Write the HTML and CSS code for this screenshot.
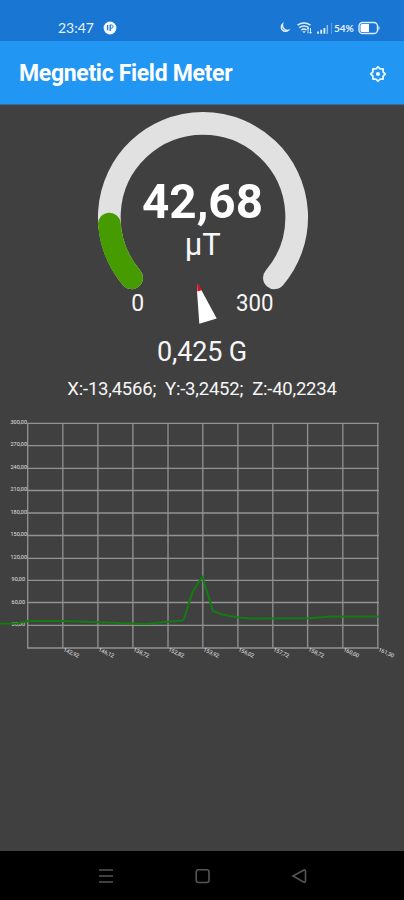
FILE: index.html
```html
<!DOCTYPE html>
<html lang="en">
<head>
<meta charset="utf-8">
<title>Megnetic Field Meter</title>
<link rel="stylesheet" href="styles.css">
</head>
<body>
<div class="phone">
  <header class="status">
    <span class="clock">23:47</span>
    <svg class="badge" width="14" height="14" viewBox="0 0 14 14"><circle cx="7" cy="7" r="6.4" fill="#f4f9ff"/><path d="M4.6 4v5.2M7.2 3.8v6.2" fill="none" stroke="#1976d2" stroke-width="1.3"/><path d="M7.200 4h1.200a1.500 1.500 0 0 1 0 3.200H7.200" fill="none" stroke="#1976d2" stroke-width=".9"/></svg>
    <svg class="signals" width="56" height="16" viewBox="0 0 56 16" fill="none" stroke="#e3effb">
      <path d="M4.6 4A4.2 4.2 0 1 0 10.400 10.200A5 5 0 0 1 4.600 4Z" stroke-width="1.3"/>
      <path d="M19.5 5.2Q26 .8 32.5 5.2M21.3 7.7Q26 4.5 30.7 7.7M23.3 10Q26 8 28.5 10" stroke-width="1.5"/>
      <path d="M24.4 11.2h3.2L26 13.3z" fill="#e3effb" stroke="none"/>
      <path d="M30 8v5.3M32.5 8v5.3M28.8 9.2L30 8l1 1.2M31.5 12l1 1.3 1.2-1.3" stroke-width=".9"/>
      <path d="M40 11.5v2.3M43.2 9.8v4M46.4 8v5.8" stroke-width="1.8"/><path d="M49.3 5v8.8" stroke-width="1.5" opacity=".6"/><path d="M53.5 3v11" stroke-width="1" opacity=".35"/>
    </svg>
    <span class="percent">54%</span>
    <svg width="23" height="14" viewBox="0 0 23 14"><rect x="1" y="1.5" width="18.5" height="11" rx="3.6" fill="none" stroke="#dcebfa" stroke-width="1.4"/><path d="M4 3h7v8H4a1.5 1.5 0 0 1-1.5-1.5v-5A1.5 1.5 0 0 1 4 3z" fill="#fff"/><path d="M20.5 4.5Q22.8 7 20.5 9.5z" fill="#dcebfa"/></svg>
  </header>
  <div class="appbar">
    <h1>Megnetic Field Meter</h1>
    <svg width="18" height="18" viewBox="-9 -9 18 18" fill="none" stroke="#eaf5ff"><path d="M0-7.2L2.1-5.1L5.1-5.1L5.1-2.1L7.2 0L5.1 2.1L5.1 5.1L2.1 5.1L0 7.2L-2.1 5.1L-5.1 5.1L-5.1 2.1L-7.2 0L-5.1-2.1L-5.1-5.1L-2.1-5.1Z" stroke-width="1.8" stroke-linejoin="round"/><circle r="2.1" fill="#eaf5ff" stroke="none"/></svg>
  </div>
  <main>
    <svg class="gauge" width="404" height="225" viewBox="0 105 404 225">
      <path class="track" d="M131.6 277.8A93.7 93.7 0 1 1 274.4 277.8"/>
      <path class="level" d="M131.6 277.8A93.7 93.7 0 0 1 109.4 224"/>
      <text class="value" x="202.5" y="217.5" textLength="121" lengthAdjust="spacingAndGlyphs">42,68</text>
      <text class="unit" x="202.7" y="255" textLength="36" lengthAdjust="spacingAndGlyphs">μT</text>
      <text class="limit" x="137.7" y="311">0</text>
      <text class="limit" x="254.7" y="311" textLength="37.5" lengthAdjust="spacingAndGlyphs">300</text>
      <path d="M197.8 284L202 291.3L216.7 318.4L199.3 323.7L197 291Z" fill="#fff"/>
      <path d="M197.5 283L202 290L197.3 291.5Z" fill="#d90c16"/>
    </svg>
    <div class="gauss">0,425 G</div>
    <div class="axes"><span>X:-13,4566;</span><span>Y:-3,2452;</span><span>Z:-40,2234</span></div>
    <svg class="chart" width="404" height="250" viewBox="0 413 404 250">
      <path class="grid" d="M27 423.3H379M27 445.7H379M27 468.3H379M27 490.5H379M27 513H379M27 535.5H379M27 558.3H379M27 580.4H379M27 602.5H379M27 625.3H379M27 648H379M27.7 423V648M62.8 423V648M97.9 423V648M132.9 423V648M168 423V648M202.8 423V648M237.9 423V648M272.8 423V648M307.6 423V648M342.8 423V648M377.8 423V648"/>
      <g class="ylabels">
        <text x="27" y="423.8">300,00</text><text x="27" y="446.4">270,00</text><text x="27" y="468.9">240,00</text><text x="27" y="491.1">210,00</text><text x="27" y="513.6">180,00</text><text x="27" y="536.1">150,00</text><text x="27" y="558.6">120,00</text><text x="25" y="581">90,00</text><text x="25" y="603.5">60,00</text><text x="25" y="626">30,00</text>
      </g>
      <g class="xlabels">
        <text transform="translate(63 651) rotate(24)">142,92</text><text transform="translate(98 651) rotate(24)">146,12</text><text transform="translate(133 651) rotate(24)">138,72</text><text transform="translate(168 651) rotate(24)">152,82</text><text transform="translate(203 651) rotate(24)">153,92</text><text transform="translate(238 651) rotate(24)">156,02</text><text transform="translate(273 651) rotate(24)">157,72</text><text transform="translate(308 651) rotate(24)">158,72</text><text transform="translate(343 651) rotate(24)">160,00</text><text transform="translate(378 651) rotate(24)">161,30</text>
      </g>
      <path class="series" d="M0 623.8L18 623.3L28 621L65 621L98 622.3L133 623.5L146 624L165 622L182 620.5L184 619L192.5 592L202.3 576.5L213 611L222 614.5L238 617.5L250 618.5L308 618.3L332 616.5H378.5"/>
    </svg>
  </main>
  <nav>
    <svg width="16" height="16" viewBox="0 0 16 16"><path d="M1 2h14M1 8h14M1 14h14"/></svg>
    <svg width="16" height="16" viewBox="0 0 16 16"><rect x="1.2" y="1.7" width="12.8" height="12.8" rx="2.2"/></svg>
    <svg width="16" height="16" viewBox="0 0 16 16"><path d="M13 2L2 8l11 6.2q1.5.4 1.5-1.2V3.2Q14.5 1.5 13 2z"/></svg>
  </nav>
</div>
</body>
</html>
```
FILE: styles.css
```css
body { margin: 0; background: #404040; font-family: Roboto, sans-serif; color: #f5f5f5; }
.phone { width: 404px; height: 900px; display: flex; flex-direction: column; overflow: hidden; background: #404040; }
.status { box-sizing: border-box; height: 41px; padding: 14px 23px 0 58px; display: flex; align-items: center; background: #1976d2; color: #e6f1fc; }
.clock { width: 35px; font: 400 14px/14px Lato, sans-serif; }
.badge { margin-left: 10px; }
.signals { margin-left: auto; }
.percent { width: 22px; margin: 0 2px 0 0; font: 700 10px/14px Lato, sans-serif; }
.appbar { box-sizing: border-box; height: 64px; padding: 3px 17px 0 19px; display: flex; align-items: center; justify-content: space-between; background: #2196f3; border-bottom: 1px solid #34709f; }
h1 { margin: 0; font-size: 23px; line-height: 28px; font-weight: 700; color: #fff; letter-spacing: -.32px; white-space: nowrap; }
main { flex: 1; display: flex; flex-direction: column; }
svg { display: block; flex: none; }
.track, .level { fill: none; stroke-width: 22.7; stroke-linecap: round; }
.track { stroke: #e1e1e1; }
.level { stroke: #459b00; }
.gauge text { text-anchor: middle; fill: #f7f7f7; }
.gauge .value { font-size: 49px; font-weight: 700; fill: #fff; }
.unit { font-size: 32px; }
.limit { font-size: 23px; }
.gauss { height: 42px; font-size: 27px; line-height: 45px; letter-spacing: -.15px; text-align: center; }
.axes { height: 32px; margin-bottom: 9px; display: flex; justify-content: center; gap: 9px; font-size: 18.5px; line-height: 34px; letter-spacing: -.22px; white-space: nowrap; }
.grid { fill: none; stroke: #929292; stroke-width: 1.3; }
.series { fill: none; stroke: #127b12; stroke-width: 2.1; stroke-linejoin: round; }
.ylabels text { font-size: 5.5px; text-anchor: end; fill: #e0e0e0; }
.xlabels text { font-size: 5.5px; fill: #e0e0e0; }
nav { height: 49px; box-sizing: border-box; padding: 0 97px 0 98px; display: flex; align-items: center; justify-content: space-between; background: #000; }
nav path, nav rect { fill: none; stroke: #555; stroke-width: 1.6; }
```
